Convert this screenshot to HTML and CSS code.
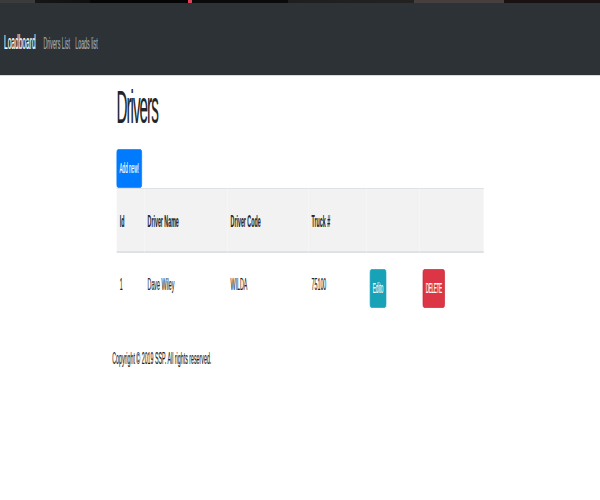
FILE: index.html
```html
<!DOCTYPE html>
<html lang="en">
<head>
<meta charset="utf-8">
<title>Loadboard - Drivers</title>
<link rel="stylesheet" href="styles.css">
</head>
<body>
<div class="frame">
<div class="page">
  <div class="strip"></div>
  <nav class="navbar">
    <a class="brand" href="#">Loadboard</a>
    <a class="nav-link" href="#">Drivers List</a>
    <a class="nav-link" href="#">Loads list</a>
  </nav>
  <main class="container">
    <h1 class="title">Drivers</h1>
    <div class="actions"><a class="btn btn-primary" href="#">Add new!</a></div>
    <table class="table">
      <colgroup>
        <col class="c-id"><col class="c-name"><col class="c-code"><col class="c-truck"><col class="c-edit"><col class="c-del">
      </colgroup>
      <thead>
        <tr><th>Id</th><th>Driver Name</th><th>Driver Code</th><th>Truck #</th><th></th><th></th></tr>
      </thead>
      <tbody>
        <tr>
          <td>1</td><td>Dave Wiley</td><td>WILDA</td><td>75100</td>
          <td class="btn-cell"><a class="btn btn-info" href="#">Edito</a></td>
          <td class="btn-cell"><a class="btn btn-danger" href="#">DELETE</a></td>
        </tr>
      </tbody>
    </table>
  </main>
  <footer class="footer">Copyright © 2019 SSP. All rights reserved.</footer>
</div>
</div>
</body>
</html>
```
FILE: styles.css
```css
html, body {
  margin: 0;
  padding: 0;
  overflow: hidden;
  background: #fff;
}

.frame {
  width: 600px;
  height: 500px;
  overflow: hidden;
}

.page {
  width: 1815px;
  transform: scaleX(0.3306);
  transform-origin: 0 0;
  font-family: "Liberation Sans", Arial, sans-serif;
  font-size: 16px;
  line-height: 24px;
  color: #212529;
  -webkit-text-stroke: 0.2px currentColor;
}

.strip {
  height: 3px;
  background: linear-gradient(to right,
    #3b3b3b 0%, #3b3b3b 5.8%,
    #161616 5.8%, #101010 15%,
    #050505 15%, #050505 31.4%,
    #e0405a 31.4%, #e0405a 32%,
    #0a0a0a 32%, #0a0a0a 48%,
    #1f1f1f 48%, #222 69%,
    #47403f 69%, #47403f 84%,
    #1a1212 84%, #1a1212 100%);
}

.navbar {
  display: flex;
  align-items: baseline;
  padding: 24px 16px 18px 12px;
  background: #2d3237;
  border-bottom: 1px solid #d9d9d9;
}

.brand {
  font-size: 20px;
  line-height: 30px;
  color: #fff;
  text-decoration: none;
  margin-right: 16px;
}

.nav-link {
  padding: 0 8px;
  color: rgba(255, 255, 255, 0.55);
  text-decoration: none;
}

.container {
  width: 1140px;
  margin: 0 auto;
  padding: 0 15px;
  box-sizing: border-box;
}

.title {
  margin: 4px 0 14px;
  font-size: 46px;
  line-height: 55px;
  font-weight: 400;
  letter-spacing: -3px;
}

.actions {
  display: flex;
}

.btn {
  display: inline-block;
  vertical-align: top;
  padding: 8px 8px;
  font-size: 14px;
  line-height: 21px;
  color: #fff;
  text-decoration: none;
  border: 1px solid transparent;
  border-radius: 4px;
}

.btn-primary {
  background: #007bff;
  border-color: #007bff;
}

.btn-info {
  background: #17a2b8;
  border-color: #17a2b8;
}

.btn-danger {
  background: #dc3545;
  border-color: #c82333;
  letter-spacing: -1px;
}

.table {
  width: 1110px;
  table-layout: fixed;
  border-collapse: separate;
  border-spacing: 0;
  margin-bottom: 23px;
}

.c-id { width: 84px; }
.c-name { width: 251px; }
.c-code { width: 245px; }
.c-truck { width: 176px; }
.c-edit { width: 160px; }
.c-del { width: 194px; }

.table th {
  text-align: left;
  font-weight: 700;
  background: #f2f2f2;
  padding: 21px 10px 17px;
  border-top: 1px solid #dee2e6;
  border-bottom: 2px solid #dee2e6;
}

.table td {
  vertical-align: top;
  padding: 20px 10px;
}

.table td.btn-cell {
  padding: 16px 10px;
}

.footer {
  width: 1140px;
  margin: 0 auto;
  padding-left: 2px;
  box-sizing: border-box;
}
```
